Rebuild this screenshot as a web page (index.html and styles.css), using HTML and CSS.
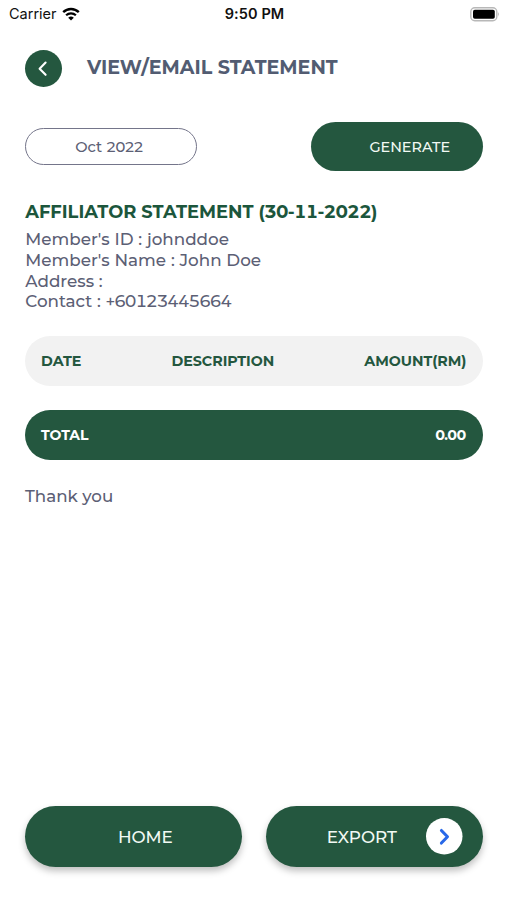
FILE: index.html
```html
<!DOCTYPE html>
<html lang="en">
<head>
<meta charset="utf-8">
<title>View/Email Statement</title>
<link rel="stylesheet" href="styles.css">
</head>
<body>
<div class="status">
  <div class="carrier"><span class="carrier-name">Carrier</span>
    <svg class="wifi" viewBox="0 0 18 14"><path d="M1.2 5.2C5.6.9 12.4.9 16.8 5.2" fill="none" stroke="#000" stroke-width="2.4"/><path d="M4.1 8.3c2.8-2.7 7-2.7 9.8 0" fill="none" stroke="#000" stroke-width="2.2"/><path d="M9 13.6 6.2 10.7q2.8-2.2 5.6 0z"/></svg>
  </div>
  <time class="clock">9:50 PM</time>
  <svg class="battery" viewBox="0 0 30 15"><rect x=".8" y=".8" width="26" height="13" rx="4" fill="#fff" stroke="#b8b8b8" stroke-width="1.4"/><rect x="3" y="2.8" width="21.8" height="9" rx="1.8"/><path d="M28.2 5q1.8 2.3 0 4.6z" fill="#aaa"/></svg>
</div>
<main class="page">
  <header class="header">
    <button class="back" aria-label="Back"><svg viewBox="0 0 37 37"><path d="M20.6 12.6 14.6 18.7l6 6.1" fill="none" stroke="#fff" stroke-width="2.1" stroke-linecap="round" stroke-linejoin="round"/></svg></button>
    <h1 class="heading">VIEW/EMAIL STATEMENT</h1>
  </header>
  <section class="filters">
    <button class="month">Oct <span class="digits">2022</span></button>
    <button class="generate">GENERATE</button>
  </section>
  <section class="info">
    <h2 class="title">AFFILIATOR STATEMENT <span class="bold-digits">(30-11-2022)</span></h2>
    <p>Member's ID : johnddoe</p>
    <p>Member's Name : John Doe</p>
    <p>Address :</p>
    <p>Contact : <span class="digits">+60123445664</span></p>
  </section>
  <div class="row columns"><span>DATE</span><span>DESCRIPTION</span><span>AMOUNT(RM)</span></div>
  <div class="row total"><span>TOTAL</span><span class="bold-digits">0.00</span></div>
  <p class="thanks">Thank you</p>
  <footer class="actions">
    <button class="action home">HOME</button>
    <button class="action export">EXPORT<svg class="go" viewBox="0 0 36 36"><circle cx="18" cy="18" r="18" fill="#fff"/><path d="m15.2 12.3 6 6.2-6 6.2" fill="none" stroke="#2868e8" stroke-width="3" stroke-linecap="round" stroke-linejoin="round"/></svg></button>
  </footer>
</main>
</body>
</html>
```
FILE: styles.css
```css
* { box-sizing: border-box; }
body { margin: 0; width: 507px; height: 900px; background: #fff; color: #5c6075; font-family: Montserrat, Inter, sans-serif; font-variant-numeric: tabular-nums; display: flex; flex-direction: column; overflow: hidden; }
h1, h2, p { margin: 0; white-space: nowrap; }
button { border: 0; padding: 0; margin: 0; font: inherit; color: inherit; white-space: nowrap; }
svg { display: block; }
.status { height: 28px; display: grid; grid-template-columns: 1fr auto 1fr; align-items: center; padding: 0 7px 0 9px; color: #111; font: 14.5px/18px Inter, sans-serif; }
.carrier { display: flex; align-items: center; gap: 5px; }
.wifi { width: 18px; height: 14px; }
.clock { font-weight: 600; letter-spacing: .1px; }
.battery { width: 30px; height: 15px; justify-self: end; }
.page { flex: 1; padding: 22px 24.5px 33px 25px; display: flex; flex-direction: column; }
.header { display: flex; align-items: center; gap: 25px; height: 37px; }
.back { width: 37px; height: 37px; border-radius: 50%; background: #24573f; }
.heading { font-size: 19.1px; line-height: 24px; margin-top: -1px; font-weight: 700; color: #525c72; }
.digits { letter-spacing: -1.1px; }
.bold-digits { letter-spacing: -.7px; }
.filters { display: flex; justify-content: space-between; align-items: center; margin-top: 35px; height: 49px; }
.month { width: 172px; height: 37px; border: 1.4px solid #74758a; border-radius: 19px; background: #fff; padding-right: 4px; font-size: 14.7px; font-weight: 500; }
.generate { width: 171.5px; height: 49px; border-radius: 25px; background: #24573f; color: #f2faf4; padding-left: 26px; font-size: 14.4px; font-weight: 500; }
.info { margin-top: 29px; padding-left: .3px; font-size: 16.75px; line-height: 20.8px; font-weight: 500; word-spacing: .3px; }
.title { font-size: 17.85px; line-height: 24px; margin-bottom: 5px; font-weight: 700; color: #1c563c; word-spacing: 0; }
.row { display: flex; align-items: center; justify-content: space-between; height: 50px; border-radius: 25px; padding: 0 16px; font-size: 14.25px; font-weight: 700; }
.columns { margin-top: 24px; background: #f2f2f2; color: #24573f; }
.total { margin-top: 24px; padding-right: 17px; background: #24573f; color: #fff; font-size: 14px; }
.thanks { margin-top: 25.5px; font-size: 16.7px; line-height: 21px; font-weight: 500; }
.actions { margin-top: auto; display: grid; grid-template-columns: repeat(2, minmax(0, 1fr)); gap: 24px; height: 61px; }
.action { border-radius: 31px; background: #24573f; color: #f2faf4; font-size: 16.8px; font-weight: 500; box-shadow: 0 4px 7px rgba(0,0,0,.25); }
.home { padding-left: 24px; }
.export { display: flex; align-items: center; justify-content: space-between; padding: 0 20px 0 61px; }
.go { width: 36.5px; height: 36.5px; }
```
